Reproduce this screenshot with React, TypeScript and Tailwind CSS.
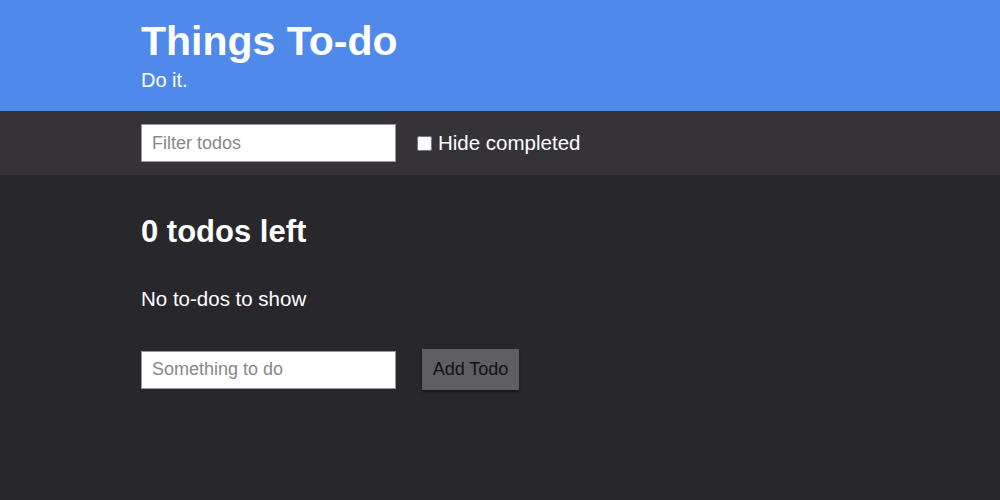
import { useState } from 'react';

export default function App() {
  const [filter, setFilter] = useState('');
  const [hide, setHide] = useState(false);
  const [draft, setDraft] = useState('');

  return (
    <div className="min-h-[500px] bg-[#28272b] font-['Liberation_Sans',Arial,sans-serif] text-white">
      {/* Header */}
      <header className="h-[111px] bg-[#4f8aea] px-[141px] pt-[18px]">
        <h1 className="text-[41px] font-bold leading-[46px]">Things To-do</h1>
        <p className="mt-[4px] text-[20px] leading-[24px]">Do it.</p>
      </header>

      {/* Toolbar */}
      <div className="flex h-[64px] items-center gap-[21px] bg-[#363338] px-[141px]">
        <input
          value={filter}
          onChange={(e) => setFilter(e.target.value)}
          placeholder="Filter todos"
          className="h-[38px] w-[255px] border border-[#999] bg-white px-[10px] text-[18px] text-black outline-none placeholder:text-[#888]"
        />
        <label className="flex items-center gap-[6px] text-[20.5px]">
          <input
            type="checkbox"
            checked={hide}
            onChange={(e) => setHide(e.target.checked)}
            className="h-[15px] w-[15px]"
          />
          Hide completed
        </label>
      </div>

      {/* Body */}
      <main className="px-[141px] pt-[39px]">
        <h2 className="text-[31px] font-bold leading-[36px]">0 todos left</h2>
        <p className="mt-[37px] text-[20.5px] leading-[24px]">No to-dos to show</p>
        <div className="mt-[38px] flex items-center gap-[26px]">
          <input
            value={draft}
            onChange={(e) => setDraft(e.target.value)}
            placeholder="Something to do"
            className="h-[38px] w-[255px] border border-[#999] bg-white px-[10px] text-[18px] text-black outline-none placeholder:text-[#888]"
          />
          <button className="h-[41px] w-[97px] bg-[#5f5e63] text-[18px] text-[#111] shadow-[0_2px_2px_rgba(0,0,0,0.5)]">
            Add Todo
          </button>
        </div>
      </main>
    </div>
  );
}
